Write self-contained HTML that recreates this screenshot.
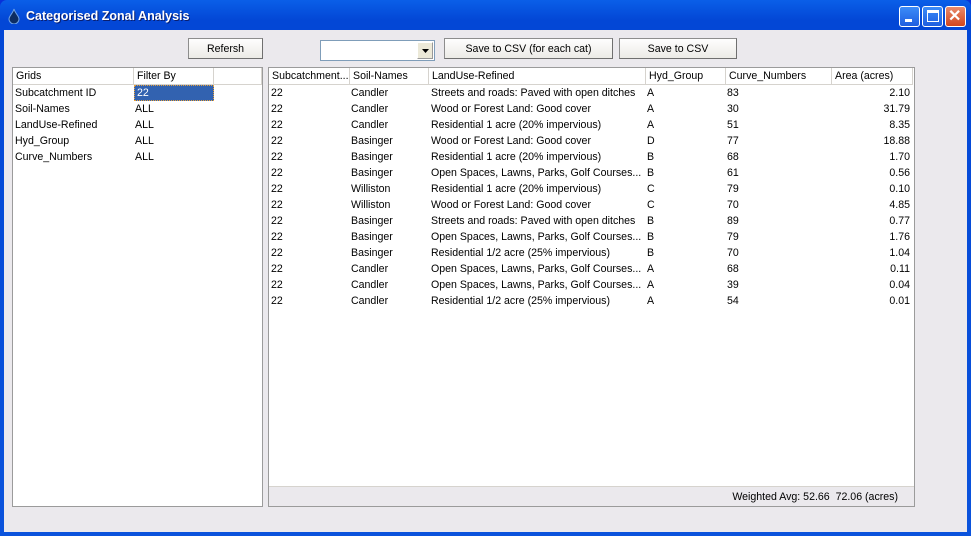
<!DOCTYPE html>
<html><head><style>
*{box-sizing:border-box;margin:0;padding:0}
body{width:971px;height:536px;overflow:hidden;font-family:"Liberation Sans",sans-serif;font-size:10.6px;color:#000;background:#0831d9}
.win{position:absolute;left:0;top:0;width:971px;height:536px;background:linear-gradient(#0a5fe8,#0347d6 20px,#0b53dc);border-radius:7px 7px 0 0}
.title{position:absolute;left:26px;top:9px;color:#fff;font-weight:bold;font-size:12.5px;text-shadow:1px 1px #0a1e6e}
.client{position:absolute;left:4px;top:30px;width:963px;height:502px;background:#ebe9ed}
.btn{position:absolute;height:21px;background:linear-gradient(#fefefe,#ecebe6);border:1px solid #8d8d8d;border-right-color:#6f6f6f;border-bottom-color:#6f6f6f;text-align:center;line-height:20px}
.lb{position:absolute;background:#fff;border:1px solid #9b9b9b}
.hdr{position:absolute;top:0;height:17px;line-height:16px;border-right:1px solid #d6d3ce;border-bottom:1px solid #d6d3ce;padding-left:3px;white-space:nowrap;overflow:hidden;background:#fff}
.cell{position:absolute;height:16px;line-height:16px;white-space:nowrap}
.tb{position:absolute;top:6px;width:21px;height:21px;border:1px solid #fff;border-radius:3px;background:linear-gradient(#3c8cf8,#1f5ee0)}
</style></head><body>
<div class="win">
<svg style="position:absolute;left:8px;top:8px" width="12" height="16"><path d="M6 1 C5 5 1 8 1 11 A5 5 0 0 0 11 11 C11 8 7 5 6 1Z" fill="#0d2d63" stroke="#6fa2e6" stroke-width="1"/></svg>
<div class="title">Categorised Zonal Analysis</div>
<div class="tb" style="left:899px"><div style="position:absolute;left:5px;top:12px;width:7px;height:3px;background:#fff"></div></div>
<div class="tb" style="left:922px"><div style="position:absolute;left:4px;top:3px;width:12px;height:12px;border:1px solid #fff;border-top-width:3px"></div></div>
<div class="tb" style="left:945px;background:linear-gradient(#e88a6c,#d2461d)"><div style="position:absolute;left:2px;top:1px;color:#fff;font-size:16px;font-weight:bold;line-height:17px">✕</div></div>
<div class="client">
<div class="btn" style="left:184px;top:8px;width:75px">Refersh</div>
<div style="position:absolute;left:316px;top:10px;width:115px;height:21px;background:#fff;border:1px solid #7f9db9"><div style="position:absolute;right:1px;top:1px;width:16px;height:17px;background:#ece9d8;border:1px solid #fff;border-right-color:#999;border-bottom-color:#999"><svg width="14" height="15"><path d="M4 6h7l-3.5 4z" fill="#000"/></svg></div></div>
<div class="btn" style="left:440px;top:8px;width:169px">Save to CSV (for each cat)</div>
<div class="btn" style="left:615px;top:8px;width:118px">Save to CSV</div>
<div class="lb" style="left:8px;top:37px;width:251px;height:440px">
<div class="hdr" style="left:0;width:121px">Grids</div>
<div class="hdr" style="left:121px;width:80px">Filter By</div>
<div class="hdr" style="left:201px;width:48px"></div>
<div class="cell" style="left:2px;top:17px">Subcatchment ID</div>
<div style="position:absolute;left:121px;top:17px;width:80px;height:16px;background:#3262b0;border:1px dotted #e8a23c;color:#fff;padding-left:2px;line-height:14px">22</div>
<div class="cell" style="left:2px;top:33px">Soil-Names</div><div class="cell" style="left:122px;top:33px">ALL</div>
<div class="cell" style="left:2px;top:49px">LandUse-Refined</div><div class="cell" style="left:122px;top:49px">ALL</div>
<div class="cell" style="left:2px;top:65px">Hyd_Group</div><div class="cell" style="left:122px;top:65px">ALL</div>
<div class="cell" style="left:2px;top:81px">Curve_Numbers</div><div class="cell" style="left:122px;top:81px">ALL</div>
</div>
<div class="lb" style="left:264px;top:37px;width:647px;height:440px">
<div class="hdr" style="left:0;width:81px">Subcatchment...</div>
<div class="hdr" style="left:81px;width:79px">Soil-Names</div>
<div class="hdr" style="left:160px;width:217px">LandUse-Refined</div>
<div class="hdr" style="left:377px;width:80px">Hyd_Group</div>
<div class="hdr" style="left:457px;width:106px">Curve_Numbers</div>
<div class="hdr" style="left:563px;width:81px">Area (acres)</div>
<div id="rows"></div>
<div style="position:absolute;left:0;top:418px;width:645px;height:20px;background:#ebe9ed;border-top:1px solid #d6d3ce;text-align:right;padding-right:16px;line-height:20px">Weighted Avg: 52.66&nbsp; 72.06 (acres)</div>
</div>
</div></div>
<script>
var d=[["Candler","Streets and roads: Paved with open ditches","A","83","2.10"],["Candler","Wood or Forest Land: Good cover","A","30","31.79"],["Candler","Residential 1 acre (20% impervious)","A","51","8.35"],["Basinger","Wood or Forest Land: Good cover","D","77","18.88"],["Basinger","Residential 1 acre (20% impervious)","B","68","1.70"],["Basinger","Open Spaces, Lawns, Parks, Golf Courses...","B","61","0.56"],["Williston","Residential 1 acre (20% impervious)","C","79","0.10"],["Williston","Wood or Forest Land: Good cover","C","70","4.85"],["Basinger","Streets and roads: Paved with open ditches","B","89","0.77"],["Basinger","Open Spaces, Lawns, Parks, Golf Courses...","B","79","1.76"],["Basinger","Residential 1/2 acre (25% impervious)","B","70","1.04"],["Candler","Open Spaces, Lawns, Parks, Golf Courses...","A","68","0.11"],["Candler","Open Spaces, Lawns, Parks, Golf Courses...","A","39","0.04"],["Candler","Residential 1/2 acre (25% impervious)","A","54","0.01"]];
var h="";d.forEach(function(r,i){var t=17+i*16;h+='<div class="cell" style="left:2px;top:'+t+'px">22</div><div class="cell" style="left:82px;top:'+t+'px">'+r[0]+'</div><div class="cell" style="left:162px;top:'+t+'px">'+r[1]+'</div><div class="cell" style="left:378px;top:'+t+'px">'+r[2]+'</div><div class="cell" style="left:458px;top:'+t+'px">'+r[3]+'</div><div class="cell" style="left:563px;width:78px;text-align:right;top:'+t+'px">'+r[4]+'</div>';});
document.getElementById("rows").innerHTML=h;
</script>
</body></html>
